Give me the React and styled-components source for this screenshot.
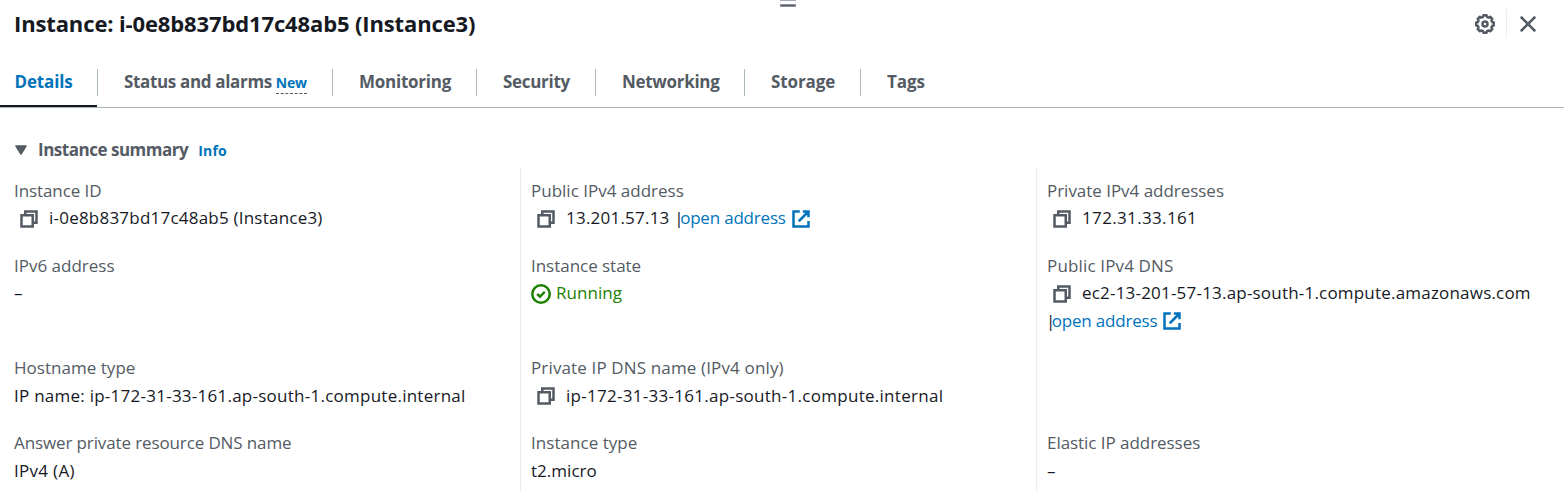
import React from 'react';
import styled, { createGlobalStyle } from 'styled-components';

const GlobalStyle = createGlobalStyle`
  *, *::before, *::after { box-sizing: border-box; }
  body {
    margin: 0;
    background: #ffffff;
    color: #16191f;
    font-family: 'Open Sans', 'Noto Sans', sans-serif;
    font-size: 17px;
    line-height: 27.5px;
  }
`;

const Panel = styled.main`
  position: relative;
  height: 492px;
  overflow: hidden;
`;

const DragHandle = styled.svg`
  position: absolute;
  left: 780px;
  top: 0;
`;

const Header = styled.header`
  display: flex;
  justify-content: space-between;
  height: 48px;
  padding: 9px 26px 0 14px;
`;

const Title = styled.h1`
  margin: -1px 0 0;
  font-size: 22px;
  font-weight: 700;
  line-height: 30px;
  letter-spacing: -0.13px;
`;

const Actions = styled.div`
  display: flex;
  align-items: center;
  height: 29px;
  color: #545b64;
`;

const IconButton = styled.button`
  display: flex;
  padding: 0;
  border: 0;
  background: none;
  color: inherit;
`;

const ActionDivider = styled.span`
  width: 1px;
  height: 29px;
  margin: 0 11px;
  background: #eaeded;
`;

const TabBar = styled.nav`
  display: flex;
  height: 60px;
  border-bottom: 1px solid #aab7b8;
`;

const Tab = styled.a`
  display: flex;
  align-items: flex-start;
  flex: 0 0 ${(p) => p.$width}px;
  height: 59px;
  padding-top: 21px;
  border-bottom: 2px solid ${(p) => (p.$active ? '#16191f' : 'transparent')};
  color: ${(p) => (p.$active ? '#0073bb' : '#545b64')};
`;

const TabLabel = styled.span`
  flex: 1;
  height: 27px;
  margin-right: -1px;
  padding-left: ${(p) => p.$inset}px;
  border-right: 1px solid ${(p) => (p.$last ? 'transparent' : '#aab7b8')};
  font-weight: 700;
  line-height: 26px;
  letter-spacing: ${(p) => p.$tracking}px;
  white-space: nowrap;
`;

const NewTag = styled.span`
  display: inline-block;
  height: 21px;
  margin-left: 4px;
  border-bottom: 1px dashed #545b64;
  color: #0073bb;
  font-size: 14px;
  line-height: 20px;
  letter-spacing: -0.2px;
`;

const SummaryHeader = styled.div`
  display: flex;
  align-items: baseline;
  height: 60px;
  padding: 28px 0 0 15px;
`;

const Caret = styled.svg`
  margin-right: 11px;
`;

const SummaryTitle = styled.h2`
  margin: 0;
  color: #545b64;
  font-size: 17px;
  font-weight: 700;
  letter-spacing: -0.48px;
`;

const InfoLink = styled.a`
  margin-left: 10px;
  color: #0073bb;
  font-size: 14px;
  font-weight: 700;
  letter-spacing: 0.2px;
`;

const Columns = styled.div`
  display: grid;
  grid-template-columns: 520px 516px 1fr;
  height: 324px;
`;

const Column = styled.dl`
  display: grid;
  grid-template-rows: 55px 82.5px 55px 55px;
  row-gap: 20px;
  margin: 0;
  padding: 8.5px 0 0 ${(p) => (p.$first ? 14 : 10)}px;
  border-left: ${(p) => (p.$first ? '0' : '1px solid #eaeded')};
`;

const Label = styled.dt`
  color: #545b64;
  letter-spacing: ${(p) => p.$tracking || 0}px;
`;

const Glyph = styled.svg`
  display: block;
  flex: none;
  width: 20px;
  height: 20px;
  fill: none;
  stroke: currentColor;
  stroke-width: 2;
`;

const Value = styled.dd`
  display: flex;
  align-items: center;
  height: 27.5px;
  margin: 0 0 0 ${(p) => (p.$outdent ? -1 : 0)}px;

  ${Glyph} {
    margin-top: 2px;
  }
`;

const Text = styled.span`
  letter-spacing: ${(p) => p.$tracking || 0}px;
  white-space: pre;
`;

const Link = styled.a`
  display: inline-flex;
  align-items: center;
  gap: 5px;
  margin-left: ${(p) => p.$shift || 0}px;
  color: #0073bb;
  letter-spacing: -0.2px;
`;

const Status = styled.span`
  display: inline-flex;
  align-items: center;
  gap: 5px;
  color: #1d8102;
  letter-spacing: 0.05px;
`;

const CopyButton = styled.button`
  display: flex;
  margin: 0 10px 0 5px;
  padding: 0;
  border: 0;
  background: none;
  color: #545b64;
`;

const Copy = () => (
  <CopyButton aria-label="Copy">
    <Glyph viewBox="0 0 16 16">
      <path d="M2 5h9v9H2z" />
      <path d="M5 5V2h9v9h-3" />
    </Glyph>
  </CopyButton>
);

const OpenAddress = ({ shift }) => (
  <Link $shift={shift}>
    <span>open address</span>
    <Glyph viewBox="0 0 16 16">
      <path d="M7 2H2v12h12V9.5" />
      <path d="M9.5 2H14v4.5M14 2 6.2 9.8" />
    </Glyph>
  </Link>
);

const gearOutline = (() => {
  const points = [];
  for (let i = 0; i < 8; i += 1) {
    [[-10, 7.1], [10, 7.1], [15.5, 5.9], [29.5, 5.9]].forEach(([deg, r]) => {
      const a = ((i * 45 + deg) * Math.PI) / 180;
      points.push(`${(8 + r * Math.cos(a)).toFixed(2)},${(8 + r * Math.sin(a)).toFixed(2)}`);
    });
  }
  return points.join(' ');
})();

const tabs = [
  { name: 'Details', width: 97, inset: 14.5, tracking: -0.15 },
  { name: 'Status and alarms', width: 235, inset: 27, tracking: -0.34, isNew: true },
  { name: 'Monitoring', width: 144, inset: 27, tracking: -0.25 },
  { name: 'Security', width: 119, inset: 27, tracking: -0.3 },
  { name: 'Networking', width: 149, inset: 27, tracking: -0.3 },
  { name: 'Storage', width: 116, inset: 27, tracking: -0.1 },
  { name: 'Tags', width: 90, inset: 27, tracking: -0.1 },
];

const columns = [
  [
    { label: 'Instance ID', lt: -0.09, copy: true, value: 'i-0e8b837bd17c48ab5 (Instance3)', vt: 0.22 },
    { label: 'IPv6 address', lt: 0, value: '–' },
    { label: 'Hostname type', lt: 0.03, value: 'IP name: ip-172-31-33-161.ap-south-1.compute.internal', vt: 0.25 },
    { label: 'Answer private resource DNS name', lt: -0.12, value: 'IPv4 (A)', vt: 0.3 },
  ],
  [
    { label: 'Public IPv4 address', lt: 0, copy: true, value: '13.201.57.13 |', vt: 0.22, open: true },
    { label: 'Instance state', lt: -0.03, status: 'Running' },
    { label: 'Private IP DNS name (IPv4 only)', lt: 0.14, copy: true, value: 'ip-172-31-33-161.ap-south-1.compute.internal', vt: 0.28 },
    { label: 'Instance type', lt: 0.04, value: 't2.micro', vt: 0.03 },
  ],
  [
    { label: 'Private IPv4 addresses', lt: -0.03, copy: true, value: '172.31.33.161', vt: 0.35 },
    { label: 'Public IPv4 DNS', lt: 0.15, copy: true, value: 'ec2-13-201-57-13.ap-south-1.compute.amazonaws.com', vt: 0.2, openBelow: true },
    null,
    { label: 'Elastic IP addresses', lt: -0.05, value: '–' },
  ],
];

const Field = ({ label, lt, copy, value, vt, open, openBelow, status }) => (
  <div>
    <Label $tracking={lt}>{label}</Label>
    <Value>
      {copy && <Copy />}
      {value && <Text $tracking={vt}>{value}</Text>}
      {open && <OpenAddress shift={-3.6} />}
      {status && (
        <Status>
          <Glyph viewBox="0 0 16 16">
            <circle cx="8" cy="8" r="7" />
            <path d="m5 8 2.2 2.2L11 6.2" />
          </Glyph>
          {status}
        </Status>
      )}
    </Value>
    {openBelow && (
      <Value $outdent>
        <Text $tracking={-3.6}>|</Text>
        <OpenAddress />
      </Value>
    )}
  </div>
);

export default function App() {
  return (
    <>
      <GlobalStyle />
      <Panel>
        <DragHandle width="16" height="8" viewBox="0 0 16 8">
          <path d="M0 .5h16" stroke="#a5a9b1" />
          <path d="M0 5.5h16" stroke="#8f939e" strokeWidth="3" />
          <path d="M1 5.5h14" stroke="#545b64" />
        </DragHandle>
        <Header>
          <Title>Instance: i-0e8b837bd17c48ab5 (Instance3)</Title>
          <Actions>
            <IconButton aria-label="Settings">
              <Glyph viewBox="0 0 16 16" strokeLinejoin="round">
                <polygon points={gearOutline} />
                <circle cx="8" cy="8" r="2" />
              </Glyph>
            </IconButton>
            <ActionDivider />
            <IconButton aria-label="Close">
              <Glyph viewBox="0 0 16 16">
                <path d="m2.2 2.2 11.6 11.6M13.8 2.2 2.2 13.8" />
              </Glyph>
            </IconButton>
          </Actions>
        </Header>
        <TabBar>
          {tabs.map((tab, i) => (
            <Tab key={tab.name} $width={tab.width} $active={i === 0}>
              <TabLabel $inset={tab.inset} $tracking={tab.tracking} $last={i === tabs.length - 1}>
                {tab.name}
                {tab.isNew && <NewTag>New</NewTag>}
              </TabLabel>
            </Tab>
          ))}
        </TabBar>
        <SummaryHeader>
          <Caret width="12" height="11" viewBox="0 0 12 11">
            <path d="M1 1h10L6 9z" fill="#545b64" stroke="#545b64" strokeWidth="1.5" strokeLinejoin="round" />
          </Caret>
          <SummaryTitle>Instance summary</SummaryTitle>
          <InfoLink>Info</InfoLink>
        </SummaryHeader>
        <Columns>
          {columns.map((fields, c) => (
            <Column key={c} $first={c === 0}>
              {fields.map((field, r) => (field ? <Field key={r} {...field} /> : <div key={r} />))}
            </Column>
          ))}
        </Columns>
      </Panel>
    </>
  );
}
